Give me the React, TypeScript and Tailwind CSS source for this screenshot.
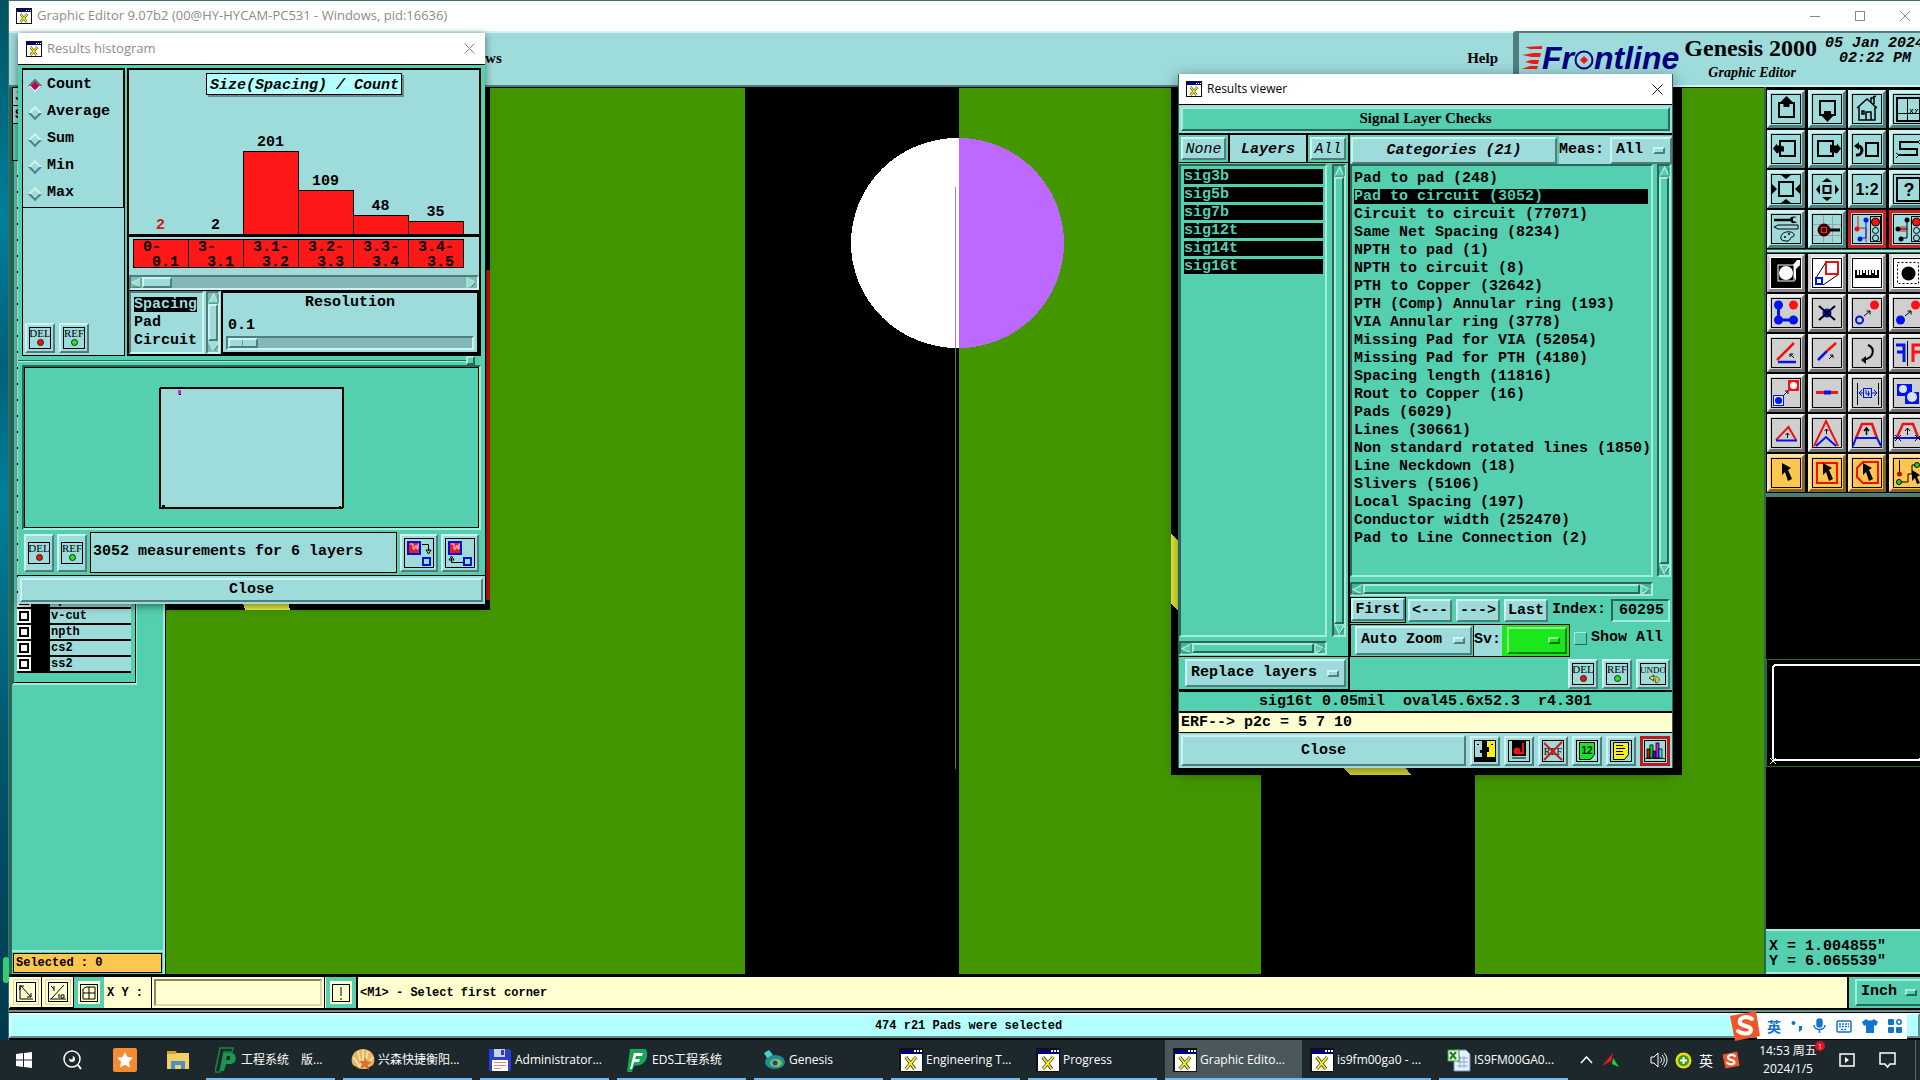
import { useState } from "react";
import type { ReactNode } from "react";

const RAISED = "border-2 border-t-[#cdf3f2] border-l-[#cdf3f2] border-b-[#517d7d] border-r-[#517d7d] bg-[#9edbdb]";
const RAISED_GREEN = "border-2 border-t-[#a6ecdb] border-l-[#a6ecdb] border-b-[#286858] border-r-[#286858] bg-[#54cfb0]";
const SUNKEN_GREEN = "border-2 border-b-[#a6ecdb] border-r-[#a6ecdb] border-t-[#286858] border-l-[#286858] bg-[#54cfb0]";

const BARS = [
  { count: 2, height: 0, from: "0-", to: "0.1", outlier: true },
  { count: 2, height: 0, from: "3-", to: "3.1" },
  { count: 201, height: 83, from: "3.1-", to: "3.2" },
  { count: 109, height: 44, from: "3.2-", to: "3.3" },
  { count: 48, height: 19, from: "3.3-", to: "3.4" },
  { count: 35, height: 13, from: "3.4-", to: "3.5" },
];

const LAYERS = ["sig3b", "sig5b", "sig7b", "sig12t", "sig14t", "sig16t"];

const CATEGORIES = [
  "Pad to pad (248)",
  "Pad to circuit (3052)",
  "Circuit to circuit (77071)",
  "Same Net Spacing (8234)",
  "NPTH to pad (1)",
  "NPTH to circuit (8)",
  "PTH to Copper (32642)",
  "PTH (Comp) Annular ring (193)",
  "VIA Annular ring (3778)",
  "Missing Pad for VIA (52054)",
  "Missing Pad for PTH (4180)",
  "Spacing length (11816)",
  "Rout to Copper (16)",
  "Pads (6029)",
  "Lines (30661)",
  "Non standard rotated lines (1850)",
  "Line Neckdown (18)",
  "Slivers (5106)",
  "Local Spacing (197)",
  "Conductor width (252470)",
  "Pad to Line Connection (2)",
];

/* ---------- icons ---------- */

function XWinIcon({ size = 16 }: { size?: number }) {
  return (
    <svg width={size} height={size} viewBox="0 0 16 16" shapeRendering="crispEdges" className="shrink-0">
      <rect width="16" height="16" fill="#111" />
      <rect x="1" y="1" width="14" height="14" fill="#fff" />
      <rect x="1" y="1" width="14" height="3" fill="#000080" />
      <path d="M10 2h1M12 2h1M14 2h1" stroke="#fff" />
      <path d="M4.500 6l6 8M11.500 6l-7 8" stroke="#222" strokeWidth="2.200" shapeRendering="auto" />
      <path d="M4.500 6l6 8M11.500 6l-7 8" stroke="#f4ee1c" strokeWidth="1.300" shapeRendering="auto" />
    </svg>
  );
}

function CloseX({ color = "#111" }: { color?: string }) {
  return (
    <svg width="11" height="11" viewBox="0 0 11 11" stroke={color} strokeWidth="1">
      <path d="M.5 .5l10 10M10.5 .5l-10 10" />
    </svg>
  );
}

function DelIcon({ word, dot }: { word: string; dot?: string }) {
  const wide = word === "UNDO";
  const w = wide ? 26 : 22;
  return (
    <svg width={w} height="22" viewBox={`0 0 ${w} 22`} className="overflow-visible">
      <rect x=".5" y=".5" width={w - 1} height="21" fill="none" stroke="#000" />
      <text x={w / 2} y="10" fontSize={wide ? 9 : 11} fontWeight="normal" fontFamily="Liberation Serif" textAnchor="middle">
        {word}
      </text>
      {dot ? (
        <circle cx="11.5" cy="15.5" r="3" fill={dot} stroke="#222" />
      ) : (
        <path d="M16 20c5-1 4-8-3-6l1-2-5 3 5 3-1-2c4-1 4 2 2 2z" fill="#f4ee1c" stroke="#222" strokeWidth=".8" />
      )}
    </svg>
  );
}

function SmallButton({ word, dot, tall }: { word: string; dot?: string; tall?: boolean }) {
  return (
    <button
      type="button"
      className={`flex shrink-0 items-center justify-center ${RAISED} ${word === "UNDO" ? "w-[34px]" : "w-[30px]"} ${tall ? "h-[38px]" : "h-[30px]"}`}
    >
      <DelIcon word={word} dot={dot} />
    </button>
  );
}

const CURSOR = "M11 5l9 5-3 2 4 9-4 2-3-9-3 3z";

const toolIcons: ReactNode[] = [
  // view controls
  <>
    <rect x="8" y="9" width="15" height="14" fill="none" stroke="#000" strokeWidth="2" />
    <path d="M15.5 2l-6 6v2h3v3h6v-3h3V8z" />
  </>,
  <>
    <rect x="8" y="7" width="15" height="14" fill="none" stroke="#000" strokeWidth="2" />
    <path d="M12 17h7v4h3l-6.500 7-6.500-7h3z" />
  </>,
  <g fill="none" stroke="#000" strokeWidth="1.5">
    <path d="M5 14l10-9 10 9M7 13v13h16V13M14 26v-8h5v8M10 17h2v3h-2zM19 8V4h3v6M21 3l3-1" />
  </g>,
  <g fill="none" stroke="#000">
    <rect x="4" y="4" width="23" height="23" strokeWidth="2" />
    <path d="M14.500 4v23M4 19.500h23M17 15l3 4M20 15l-3 4M22 15l1.500 2M25 15l-3 4" />
  </g>,
  <>
    <rect x="9" y="7" width="15" height="15" fill="none" stroke="#000" strokeWidth="2" />
    <path d="M2 14.500l4-5v2h3l4 1v5H9l-3 2z" />
  </>,
  <>
    <rect x="6" y="7" width="15" height="15" fill="none" stroke="#000" strokeWidth="2" />
    <path d="M29 14.500l-4-5v2h-3l-4-1v8h4l3 1z" />
  </>,
  <>
    <rect x="14" y="9" width="12" height="13" fill="none" stroke="#000" strokeWidth="2" />
    <path d="M4 21c7 1 8-9 2-9" fill="none" stroke="#000" strokeWidth="3" />
    <path d="M2 12l5-4v8z" />
  </>,
  <>
    <path d="M25 8H7v7h17v6H6" fill="none" stroke="#000" strokeWidth="2" />
    <path d="M25 8l3-3M25 8l3 3M6 21l-3-2M6 21l-3 3" stroke="#000" />
  </>,
  <>
    <rect x="8" y="8" width="14" height="14" fill="none" stroke="#000" strokeWidth="2" />
    <path d="M10 1h10l-5 4zM10 29h10l-5-4zM1 10v10l5-5zM29 10v10l-5-5z" />
  </>,
  <>
    <rect x="11.500" y="12" width="7" height="7" fill="none" stroke="#000" strokeWidth="2" />
    <path d="M15 4l5 4H10zM15 27l5-4H10zM4 15.500l4-5v10zM27 15.500l-4-5v10z" />
  </>,
  <text x="15" y="21" fontSize="16" fontWeight="bold" textAnchor="middle" fontFamily="Liberation Sans">1:2</text>,
  <>
    <rect x="4" y="4" width="23" height="23" fill="none" stroke="#000" strokeWidth="2" />
    <text x="16" y="22" fontSize="18" fontWeight="bold" textAnchor="middle" fontFamily="Liberation Sans">?</text>
  </>,
  <>
    <path d="M3 6h16" stroke="#000" strokeWidth="2.500" />
    <path d="M26 3c-6-2-9 2-6 5 2 2 5 1 6 0l-4-1V4z" />
    <path d="M3 13l4-2h20v4H7z" fill="none" stroke="#000" />
    <path d="M10 25c-1-5 4-8 9-7 5 0 5 5 2 5-2 0-1 3-4 4-3 0-6 0-7-2z" fill="none" stroke="#000" />
    <circle cx="14" cy="23" r="1" /><circle cx="18" cy="20" r="1" />
  </>,
  <>
    <path d="M11.500 1v28M20.500 1v28M1 10.500h28M1 21.500h28" stroke="#b39a9e" />
    <circle cx="12" cy="16" r="6" fill="#400" stroke="#000" />
    <rect x="9.500" y="13.500" width="5" height="5" fill="none" stroke="#f22" />
    <path d="M18 16h10" stroke="#000" strokeWidth="3" />
  </>,
  <>
    <path d="M6 2v12h8v14" fill="none" stroke="#e11" />
    <path d="M14 5v19H8" fill="none" stroke="#0014f0" />
    <circle cx="5" cy="15" r="2.500" fill="#e11" /><circle cx="14" cy="6" r="2.500" fill="#0014f0" /><circle cx="8" cy="25" r="2.500" fill="#0014f0" />
    <rect x="18.500" y="2.500" width="10" height="25" fill="none" stroke="#000" />
    <circle cx="23.500" cy="8" r="4" fill="#f11" stroke="#000" /><circle cx="23.500" cy="16.500" r="3" fill="none" stroke="#000" /><circle cx="23.500" cy="24" r="3" fill="none" stroke="#000" />
  </>,
  <>
    <path d="M14 5v19H8M6 15h8" fill="none" stroke="#000" />
    <path d="M8 12v6M10 12v6M12 12v6" stroke="#e11" />
    <circle cx="5" cy="15" r="2.500" /><circle cx="14" cy="6" r="2.500" /><circle cx="8" cy="25" r="2.500" />
    <rect x="18.500" y="2.500" width="10" height="25" fill="none" stroke="#000" />
    <circle cx="23.500" cy="8" r="4" fill="#f11" stroke="#000" /><circle cx="23.500" cy="16.500" r="3" fill="none" stroke="#000" /><circle cx="23.500" cy="24" r="3" fill="none" stroke="#000" />
  </>,
  // selection filters
  <>
    <rect x="1" y="1" width="28" height="28" />
    <path d="M17 7h5l4-5h3v5l-4 4v12" fill="#fff" />
    <rect x="7" y="7" width="16" height="16" fill="#000" stroke="#fff" />
    <circle cx="15" cy="15" r="7" fill="#fff" />
  </>,
  <>
    <path d="M4 20L14 4M11 27l16-11" stroke="#000" />
    <rect x="14" y="4" width="12" height="12" fill="#fff" stroke="#e11" strokeWidth="2" />
    <rect x="4" y="20" width="6" height="6" fill="#fff" stroke="#0014f0" strokeWidth="2" />
  </>,
  <path d="M3 12h2v5h2v-5h1v5h2v-5h1v3h2v-3h1v5h2v-5h1v5h2v-5h1v3h2v-3h1v5h2v-5h2v8H3z" />,
  <>
    <rect x="4.500" y="4.500" width="21" height="21" fill="none" stroke="#000" strokeDasharray="2 2" />
    <circle cx="15.500" cy="15.500" r="7" />
  </>,
  // edit operations
  <>
    <path d="M7.500 7v15H22" fill="none" stroke="#0014f0" strokeWidth="3" />
    <circle cx="7.500" cy="7" r="4.500" fill="#0014f0" /><circle cx="22.500" cy="7" r="4.500" fill="#f11" />
    <circle cx="7.500" cy="22" r="4.500" fill="#0014f0" /><circle cx="22.500" cy="22" r="4.500" fill="#0014f0" />
  </>,
  <>
    <circle cx="15" cy="15" r="4.500" fill="#0014c0" />
    <path d="M7 8l16 14M23 8L7 22" stroke="#000" strokeWidth="2" />
  </>,
  <>
    <circle cx="22.500" cy="7" r="4.500" fill="#f11" />
    <circle cx="7.500" cy="22" r="3.500" fill="none" stroke="#0014f0" strokeWidth="2" />
    <path d="M12 18l6-5M14.500 13H18v3.500" fill="none" stroke="#000" />
  </>,
  <>
    <circle cx="22.500" cy="7" r="4.500" fill="#f11" />
    <circle cx="7.500" cy="22" r="4.500" fill="#0014f0" />
    <path d="M12 18l6-5M14.500 13H18v3.500" fill="none" stroke="#000" />
  </>,
  <>
    <path d="M6 22L23 5" stroke="#e11" strokeWidth="2.500" />
    <path d="M7 24h18" stroke="#0014f0" strokeWidth="2.500" />
    <path d="M23 20l-4-4M19 19v-3h3" fill="none" stroke="#000" />
  </>,
  <>
    <path d="M6 22l9-9" stroke="#0014f0" strokeWidth="2.500" />
    <path d="M15 13l9-8" stroke="#e11" strokeWidth="2.500" />
    <path d="M17 21l4-4M18 17h3v3" fill="none" stroke="#000" />
  </>,
  <>
    <path d="M16 7c7 3 7 13-5 15" fill="none" stroke="#000" strokeWidth="2" />
    <path d="M9 22l5-4v8z" />
  </>,
  <>
    <path d="M3 7h8v17M4 14h7" fill="none" stroke="#0014f0" strokeWidth="3" />
    <path d="M14.500 3v25" stroke="#000" />
    <path d="M28 7h-8v17M27 14h-7" fill="none" stroke="#f11" strokeWidth="3" />
  </>,
  <>
    <rect x="17" y="2" width="11" height="11" fill="#f11" /><circle cx="22.500" cy="7.500" r="3.500" fill="#fff" />
    <rect x="2.500" y="17.500" width="10" height="10" fill="#d8e0ff" stroke="#0014f0" /><circle cx="7.500" cy="22.500" r="3.500" fill="#0014f0" />
    <path d="M13 17l4-4M14 13h3v3" fill="none" stroke="#000" />
  </>,
  <>
    <path d="M4 14.500h22" stroke="#f11" strokeWidth="3" />
    <path d="M12 14.500h7" stroke="#0014f0" strokeWidth="4" />
  </>,
  <>
    <path d="M5.500 5v22M26.500 5v22" stroke="#000" />
    <path d="M7 15h5M20 15h5M10 12l-3 3 3 3M22 12l3 3-3 3" fill="none" stroke="#0014f0" />
    <rect x="11.500" y="10.500" width="8" height="9" fill="none" stroke="#0014f0" />
    <path d="M14 12v4h4M16.500 13v5" fill="none" stroke="#0014f0" />
  </>,
  <>
    <path d="M4 6h15v8h7v12H12v-8H4z" fill="#0014f0" />
    <circle cx="10" cy="11" r="4" fill="#d8e0ff" /><circle cx="19" cy="19" r="5" fill="#d8e0ff" />
  </>,
  <>
    <path d="M5 22L17.500 9 25 22" fill="none" stroke="#e11" strokeWidth="2" />
    <path d="M5 22.500h21" stroke="#0014f0" strokeWidth="2" />
    <path d="M16.500 20v-5M14.500 17l2-2 2 2" fill="none" stroke="#000" />
  </>,
  <>
    <path d="M2 28L14 3l12 25" fill="none" stroke="#e11" strokeWidth="2" />
    <path d="M4 28l10-9 10 9" fill="none" stroke="#0014f0" strokeWidth="2" />
    <path d="M14.500 16v-5M12.500 13l2-2 2 2" fill="none" stroke="#000" />
  </>,
  <>
    <path d="M4 20l6-14h10l5 14" fill="none" stroke="#e11" strokeWidth="2.500" />
    <path d="M1 28l3-8h21l4 8" fill="none" stroke="#0014f0" strokeWidth="2" />
    <path d="M14.500 17v-7M12 13l2.500-3 2.500 3" fill="none" stroke="#000" strokeWidth="1.500" />
  </>,
  <>
    <path d="M4 19l6-13h10l5 13" fill="none" stroke="#e11" strokeWidth="2.500" />
    <path d="M1 20h28" stroke="#0014f0" strokeWidth="2" />
    <path d="M14.500 17v-7M12 13l2.500-3 2.500 3M2 17l6 6M8 17l-6 6M22 17l6 6M28 17l-6 6" fill="none" stroke="#000" />
  </>,
  // pick modes
  <path d={CURSOR} />,
  <>
    <rect x="5" y="5" width="20" height="20" fill="none" stroke="#e11" strokeWidth="2" />
    <path d={CURSOR} />
  </>,
  <>
    <path d="M11 4h15v21H11l-6-6v-9z" fill="none" stroke="#e11" strokeWidth="2" />
    <path d={CURSOR} />
  </>,
  <>
    <path d="M6.500 2v14M8 24h7v-8h4V7h4" fill="none" stroke="#000" />
    <circle cx="6.500" cy="16" r="2.500" fill="#b11" /><circle cx="6" cy="24" r="2.500" fill="#2d2" stroke="#000" /><circle cx="24" cy="7" r="2.500" fill="#2d2" stroke="#000" />
    <path d="M19 12l8 5-3 2 3 6-3 1-2-6-3 3z" />
  </>,
];

function ToolButton({ index }: { index: number }) {
  const red = index === 14 || index === 15;
  let look = "bg-[#9edbdb] border-t-[#cdf3f2] border-l-[#cdf3f2] border-b-[#517d7d] border-r-[#517d7d]";
  if (red) look = "bg-[#9edbdb] border-[#d21f1f]";
  else if (index >= 36) look = "bg-[#fcc64f] border-t-[#ffe3a8] border-l-[#ffe3a8] border-b-[#836527] border-r-[#836527]";
  else if (index >= 20) look = "bg-[#cfcfcf] border-t-[#efefef] border-l-[#efefef] border-b-[#6f6f6f] border-r-[#6f6f6f]";
  else if (index >= 16) look = "bg-white border-t-[#e4e0e4] border-l-[#cfcbcf] border-b-[#8a868a] border-r-[#8a868a]";
  return (
    <button type="button" className={`flex size-[38px] items-center justify-center border-[3px] ${look}`}>
      <svg width="30" height="30" viewBox="0 0 30 30" className="shrink-0">
        <rect x=".5" y=".5" width="29" height="29" fill="none" stroke="#000" />
        {toolIcons[index]}
      </svg>
    </button>
  );
}

/* ---------- shared controls ---------- */

function Arrow({ dir, tone }: { dir: "up" | "down" | "left" | "right"; tone: string }) {
  const shapes = {
    up: "M6 1l5 10H1z",
    down: "M6 11L1 1h10z",
    left: "M1 6l10-5v10z",
    right: "M11 6L1 1v10z",
  };
  return (
    <svg width="11" height="11" viewBox="0 0 12 12" className="shrink-0">
      <path d={shapes[dir]} fill={tone} stroke="#a6ecdb" strokeWidth="1.500" />
      <path d={dir === "left" || dir === "up" ? "M1 11h10V1" : "M6 11l5-6"} fill="none" stroke="#286858" strokeWidth="1" />
    </svg>
  );
}

function VScroll({ blue }: { blue?: boolean }) {
  return (
    <div
      className={`flex w-[14px] shrink-0 flex-col items-center border-2 ${
        blue ? "border-t-[#517d7d] border-l-[#517d7d] border-b-[#cdf3f2] border-r-[#cdf3f2] bg-[#84b8b8]" : "border-t-[#286858] border-l-[#286858] border-b-[#a6ecdb] border-r-[#a6ecdb] bg-[#48b096]"
      }`}
    >
      <Arrow dir="up" tone={blue ? "#9edbdb" : "#54cfb0"} />
      <div className={`w-full flex-1 ${blue ? RAISED : RAISED_GREEN}`} />
      <Arrow dir="down" tone={blue ? "#9edbdb" : "#54cfb0"} />
    </div>
  );
}

function HScroll() {
  return (
    <div className="flex h-[14px] shrink-0 items-center border-2 border-t-[#286858] border-l-[#286858] border-b-[#a6ecdb] border-r-[#a6ecdb] bg-[#48b096]">
      <Arrow dir="left" tone="#54cfb0" />
      <div className={`h-full flex-1 ${RAISED_GREEN}`} />
      <Arrow dir="right" tone="#54cfb0" />
    </div>
  );
}

function OptionMenu({ label, value, className }: { label: string; value: string; className: string }) {
  return (
    <div className={`relative flex items-center ${className}`}>
      <select aria-label={label} className="w-full appearance-none bg-transparent pl-1 outline-none">
        <option>{value}</option>
      </select>
      <span className="pointer-events-none absolute right-[5px] h-[7px] w-3 border-2 border-t-[#cdf3f2] border-l-[#cdf3f2] border-b-[#517d7d] border-r-[#517d7d]" />
    </div>
  );
}

/* ---------- main window ---------- */

function BrandBar() {
  return (
    <div className="flex h-[56px] shrink-0 bg-[#9edbdb]">
      <div className="flex flex-1 items-center justify-end border-t-2 border-r-2 border-b-2 border-t-[#cdf3f2] border-r-[#517d7d] border-b-[#517d7d] pr-[15px] pb-[2px]">
        <div className="flex flex-1 justify-start pl-[433px]">
          <a href="#windows" className="font-['Liberation_Serif',serif] text-[15px] font-bold">Windows</a>
        </div>
        <a href="#help" className="font-['Liberation_Serif',serif] text-[15px] font-bold">Help</a>
      </div>
      <div className="flex w-[405px] shrink-0 overflow-hidden border-t-2 border-l-4 border-b-2 border-t-[#517d7d] border-l-[#517d7d] border-b-[#cdf3f2] pl-[3px]">
        <div className="flex h-[50px] shrink-0 items-center">
          <svg width="20" height="24" viewBox="0 0 20 24" fill="#f01818">
            <path d="M3 1l17-1v3H8zM0 9l11-2h8l-1 4h-8zM3 16l6-2h8l-1 4h-5zM0 23l8-3h8l-1 3z" />
          </svg>
          <span className="flex items-center font-['Liberation_Sans',sans-serif] text-[32px] leading-[36px] font-bold text-[#000080] italic">
            Fr
            <svg width="20" height="20" viewBox="0 0 20 20" className="mt-1">
              <circle cx="10" cy="10" r="8.500" fill="none" stroke="#000080" strokeWidth="2" />
              <path d="M10 6l4 4-4 4-4-4z" fill="#f01818" />
            </svg>
            ntline
          </span>
        </div>
        <div className="shrink-0 pl-[5px] font-['Liberation_Serif',serif] font-bold">
          <p className="text-[24px] leading-[30px]">Genesis 2000</p>
          <p className="pl-6 text-[14px] leading-[20px] italic">Graphic Editor</p>
        </div>
        <div className="shrink-0 pt-[3px] pl-[8px] text-[15px] leading-[15px] font-bold italic">
          <p>05 Jan 2024</p>
          <p className="pl-[14px]">02:22 PM</p>
        </div>
      </div>
    </div>
  );
}

function LayerPanel() {
  const names = [...Array(27).fill(""), "sp", "v-cut", "npth", "cs2", "ss2"];
  return (
    <div className="flex w-[156px] shrink-0 flex-col border-r-2 border-l-[3px] border-r-[#a6ecdb] border-l-[#286858] bg-[#54cfb0]">
      <div className="flex-1">
        <div className="h-[74px] w-[125px] border border-black">
          <p className="h-[18px] border-b border-black bg-[#9edbdb] pl-[2px] text-[12px] leading-[18px] font-bold">Job</p>
          <p className="h-[18px] border-b border-black bg-[#9edbdb] pl-[2px] text-[12px] leading-[18px] font-bold">Step</p>
        </div>
        <div className="w-[125px] border-r border-b-2 border-l-2 border-r-[#a6ecdb] border-b-[#a6ecdb] border-l-[#286858]">
          <ul className="border-r border-b border-black pr-1 pb-[9px] pl-[3px]">
            {names.map((name, i) => (
              <li key={i} className="flex h-4 border-b-2 border-black bg-black text-[12px] font-bold">
                <label className="flex flex-1">
                  <input
                    type="checkbox"
                    className="m-0 h-[14px] w-[14px] appearance-none border-2 border-white bg-white shadow-[inset_0_0_0_2px_#000]"
                  />
                  <span className="ml-[19px] flex-1 bg-[#9edbdb] pl-px leading-[14px]">{name}</span>
                </label>
              </li>
            ))}
          </ul>
        </div>
      </div>
      <div className="border-t-2 border-[#a6ecdb] p-[1px]">
        <p className="h-[20px] border border-black bg-[#fcc64f] pl-[2px] text-[12px] leading-[18px] font-bold">Selected : 0</p>
      </div>
    </div>
  );
}

function BoardView() {
  return (
    <div className="min-w-0 flex-1 overflow-hidden border-t border-l border-black bg-[#439600]">
      <svg viewBox="0 0 1598 886" preserveAspectRatio="xMinYMin slice" className="block h-full w-full" shapeRendering="crispEdges">
        <rect width="1598" height="886" fill="#439600" />
        <rect x="579" width="214" height="886" />
        <rect x="1095" width="214" height="886" />
        <ellipse cx="791.500" cy="155" rx="106.500" ry="105" fill="#fff" />
        <path d="M793 50a105 105 0 0 1 0 210z" fill="#bd69ff" />
        <path d="M789.500 99v161" stroke="#9c7fc4" />
        <path d="M789.500 260v421" stroke="#6a7a50" />
        {/* areas not yet redrawn behind the floating windows */}
        <rect width="324" height="522" />
        <rect x="320" y="182" width="4" height="330" fill="#b81408" />
        <path d="M76 512h46l2 10H79z" fill="#f0f03c" />
        <rect x="1005" width="511" height="687" />
        <path d="M1005 446l8 7v70l-8-7z" fill="#f0f03c" />
        <path d="M1176 679h63l6 8h-61z" fill="#f0f03c" />
      </svg>
    </div>
  );
}

function ToolPanel() {
  return (
    <div className="flex w-[156px] shrink-0 flex-col overflow-hidden border-l-2 border-[#286858] bg-[#54cfb0]">
      <div className="w-[162px] border-t border-l border-black bg-black">
        <div className="grid w-[160px] grid-cols-4 gap-[2px] pt-[2px]">
          {toolIcons.slice(0, 16).map((_, i) => (
            <ToolButton key={i} index={i} />
          ))}
        </div>
        <div className="mt-px h-[4px] border-y border-[#286858] bg-[#a6ecdb]" />
        <div className="grid w-[160px] grid-cols-4 gap-[2px] pt-px pb-px">
          {toolIcons.slice(16).map((_, i) => (
            <ToolButton key={i} index={i + 16} />
          ))}
        </div>
      </div>
      <div className="flex flex-1 flex-col justify-center border-t-4 border-[#4d7d76] bg-black">
        <svg width="156" height="108" viewBox="0 0 156 108" className="shrink-0" shapeRendering="crispEdges">
          <path d="M0 .5h156M0 107.500h156M.5 0v108" stroke="#2f6a10" />
          <rect x="7" y="6" width="148" height="95" rx="3" fill="none" stroke="#fff" strokeWidth="2" />
          <path d="M4 99l6 6M10 99l-6 6" stroke="#fff" />
        </svg>
      </div>
      <div className="h-[45px] border-y-2 border-t-[#a6ecdb] border-b-[#a6ecdb] pt-[8px] pl-[3px] text-[15px] leading-[15px] font-bold">
        <p>X = 1.004855"</p>
        <p>Y = 6.065539"</p>
      </div>
    </div>
  );
}

function CommandRow() {
  return (
    <div className="flex h-[36px] shrink-0 items-stretch border-t-[3px] border-b-2 border-black bg-[#ffffcf] pl-px text-[12px] font-bold">
      <button type="button" className="flex w-[32px] items-center justify-center border-r border-b border-black">
        <svg width="26" height="26" viewBox="0 0 26 26" fill="none" stroke="#000">
          <rect x=".5" y=".5" width="25" height="25" stroke="#d8d8a8" />
          <rect x="3.500" y="3.500" width="19" height="19" />
          <path d="M7 6v14h13M8 7l10 11M7 11V7h4M14 18h4v-4" />
        </svg>
      </button>
      <button type="button" className="flex w-[32px] items-center justify-center border-r border-b border-black">
        <svg width="26" height="26" viewBox="0 0 26 26" fill="none" stroke="#000">
          <rect x=".5" y=".5" width="25" height="25" stroke="#d8d8a8" />
          <rect x="3.500" y="3.500" width="19" height="19" />
          <path d="M5 20h16M6 20L19 6M9 7v5M6 7l3 3M14 15v4M16 16h3v3h-3z" />
        </svg>
      </button>
      <button type="button" className="flex w-[30px] items-center justify-center border-4 border-[#54cfb0]">
        <svg width="20" height="20" viewBox="0 0 20 20" fill="none" stroke="#000">
          <rect x="1.500" y="1.500" width="17" height="17" />
          <path d="M4 10V6l3-2h9v12H4zM10 4v12M4 10h12" />
        </svg>
      </button>
      <label htmlFor="xy" className="flex w-[48px] items-center border-r border-black pl-[3px]">
        X Y :
      </label>
      <div className="flex border-r border-black p-[2px]">
        <input id="xy" className="w-[168px] border-2 border-t-[#85856a] border-l-[#85856a] border-b-[#d8d8a8] border-r-[#d8d8a8] bg-[#ffffcf] px-1 outline-none" />
      </div>
      <button type="button" className="ml-px flex w-[30px] items-center justify-center border-4 border-[#54cfb0]">
        <svg width="18" height="18" viewBox="0 0 18 18" fill="none" stroke="#000">
          <rect x=".5" y=".5" width="17" height="17" />
          <path d="M9 3v9M9 14v2" />
        </svg>
      </button>
      <p className="flex flex-1 items-center border-r-2 border-l-2 border-black pl-[2px]">&lt;M1&gt; - Select first corner</p>
      <div className="w-[71px] overflow-hidden bg-[#54cfb0] py-[2px] pl-[6px]">
        <div className={`relative flex h-[27px] w-[84px] items-center text-[15px] font-bold ${RAISED_GREEN}`}>
          <select aria-label="Units" className="w-full appearance-none bg-transparent pl-1 outline-none">
            <option>Inch</option>
          </select>
          <span className={`pointer-events-none absolute left-[48px] h-[7px] w-3 ${RAISED_GREEN}`} />
        </div>
      </div>
    </div>
  );
}

/* ---------- results histogram ---------- */

function Histogram() {
  const [stat, setStat] = useState("Count");
  const [kind, setKind] = useState("Spacing");
  return (
    <section className="absolute top-[33px] left-[18px] w-[467px] bg-[#54cfb0] text-[15px] font-bold shadow-[0_2px_8px_rgba(0,0,0,0.5)]">
      <header className="flex h-[31px] items-center bg-white px-2 font-['Open_Sans',sans-serif] text-[13px] font-normal text-[#8c8c8c]">
        <XWinIcon />
        <h2 className="flex-1 pl-[5px]">Results histogram</h2>
        <button type="button" aria-label="Close window" className="pr-[2px]">
          <CloseX color="#888" />
        </button>
      </header>

      <div className="flex gap-[2px] border-t border-black px-1 pt-[3px]">
        <div className="flex w-[103px] flex-col justify-between border border-black bg-[#9edbdb]">
          <fieldset className="flex flex-col border-t border-r border-b border-black pt-[2px]">
            {["Count", "Average", "Sum", "Min", "Max"].map((s) => (
              <label key={s} className="flex h-[27px] items-center pl-[7px]">
                <input
                  type="radio"
                  name="stat"
                  checked={stat === s}
                  onChange={() => setStat(s)}
                  className="size-[10px] rotate-45 appearance-none border-2 border-t-[#cdf3f2] border-r-[#517d7d] border-b-[#517d7d] border-l-[#cdf3f2] bg-[#9edbdb] checked:border-t-[#517d7d] checked:border-r-[#cdf3f2] checked:border-b-[#cdf3f2] checked:border-l-[#517d7d] checked:bg-[#c8004c]"
                />
                <span className="pl-[7px]">{s}</span>
              </label>
            ))}
          </fieldset>
          <div className="flex gap-1 p-[2px]">
            <SmallButton word="DEL" dot="#f01010" />
            <SmallButton word="REF" dot="#20e820" />
          </div>
        </div>

        <div className="flex-1 border-2 border-black bg-[#9edbdb]">
          <div className="flex h-[27px] justify-center pt-[3px]">
            <p className="h-[22px] w-[196px] border border-black bg-[#b4ffff] px-[3px] leading-[24px] whitespace-nowrap italic shadow-[2px_2px_0_#6c8c8c]">
              Size(Spacing) / Count
            </p>
          </div>
          <div className="flex h-[140px] items-end border-b-[3px] border-black pl-[4px]">
            {BARS.map((b) => (
              <div key={b.from} className="flex w-[55px] flex-col items-center">
                <span className={b.outlier ? "leading-[17px] text-[#d01818]" : "leading-[17px]"}>{b.count}</span>
                {b.height > 0 && (
                  <div className="w-[56px] self-start border border-b-0 border-black bg-[#ff1818]" style={{ height: b.height }} />
                )}
              </div>
            ))}
          </div>
          <div className="mt-[2px] flex h-[29px] pl-[4px]">
            {BARS.map((b) => (
              <div key={b.from} className="w-[55px] border border-r-0 border-black bg-[#ff1818] pl-[9px] leading-[15px] last:w-[56px] last:border-r">
                <p>{b.from}</p>
                <p className="pl-[9px]">{b.to}</p>
              </div>
            ))}
          </div>
          <div className="mt-[7px] flex h-[15px] items-center border-2 border-t-[#517d7d] border-l-[#517d7d] border-b-[#cdf3f2] border-r-[#cdf3f2] bg-[#84b8b8]">
            <Arrow dir="left" tone="#9edbdb" />
            <div className={`h-full w-[30px] ${RAISED}`} />
            <span className="flex-1" />
            <Arrow dir="right" tone="#9edbdb" />
          </div>
          <div className="flex h-[64px] border-t border-black">
            <ul className="w-[75px] overflow-hidden border-2 border-t-[#517d7d] border-l-[#517d7d] border-b-[#cdf3f2] border-r-[#cdf3f2] pt-[2px] pl-[3px]">
              {["Spacing", "Pad", "Circuit"].map((k) => (
                <li key={k} className="flex h-[18px] items-center">
                  <button
                    type="button"
                    onClick={() => setKind(k)}
                    className={`h-[15px] text-left leading-[15px] ${kind === k ? "bg-black text-[#9edbdb]" : ""}`}
                  >
                    {k}
                  </button>
                </li>
              ))}
            </ul>
            <div className="ml-[2px] flex">
              <VScroll blue />
            </div>
            <div className="ml-px flex flex-1 flex-col border-2 border-black">
              <label htmlFor="resolution" className="text-center leading-[20px]">Resolution</label>
              <output className="pt-[5px] pl-[5px] leading-[16px]">0.1</output>
              <input
                id="resolution"
                type="range"
                min="0"
                max="10"
                defaultValue="0"
                className="mx-[3px] mt-[2px] h-[14px] appearance-none border-2 border-t-[#517d7d] border-l-[#517d7d] border-b-[#cdf3f2] border-r-[#cdf3f2] bg-[#84b8b8] [&::-webkit-slider-thumb]:h-[10px] [&::-webkit-slider-thumb]:w-[30px] [&::-webkit-slider-thumb]:appearance-none [&::-webkit-slider-thumb]:border-2 [&::-webkit-slider-thumb]:border-t-[#cdf3f2] [&::-webkit-slider-thumb]:border-l-[#cdf3f2] [&::-webkit-slider-thumb]:border-b-[#517d7d] [&::-webkit-slider-thumb]:border-r-[#517d7d] [&::-webkit-slider-thumb]:bg-[linear-gradient(90deg,#9edbdb_12px,#517d7d_12px,#cdf3f2_14px,#9edbdb_14px)]"
              />
            </div>
          </div>
        </div>
      </div>

      <div className="flex h-[9px] items-center justify-end border-black pr-[10px]">
        <span className="h-[2px] flex-1 border-b border-b-[#a6ecdb] bg-[#286858]" />
        <span className={`size-[9px] ${RAISED_GREEN}`} />
      </div>

      <div className="mx-1 border-2 border-t-[#286858] border-l-[#286858] border-b-[#a6ecdb] border-r-[#a6ecdb]">
        <div className="flex h-[161px] items-center justify-center border border-black">
          <svg width="185" height="122" viewBox="0 0 185 122" shapeRendering="crispEdges">
            <rect x="1" y="1" width="183" height="120" rx="1" fill="#9edbdb" stroke="#000" strokeWidth="2" />
            <rect x="19" y="3" width="3" height="4" fill="#d020e0" />
            <path d="M20 7h2v1h-2zM3 118h3v2H3zM180 119h2v1h-2z" />
          </svg>
        </div>
      </div>

      <div className="flex h-[45px] items-center gap-[3px] px-[6px]">
        <SmallButton word="DEL" dot="#f01010" tall />
        <SmallButton word="REF" dot="#20e820" tall />
        <p className="h-[41px] flex-1 border border-black bg-[#9edbdb] pl-[2px] leading-[38px]">3052 measurements for 6 layers</p>
        {[0, 1].map((i) => (
          <button key={i} type="button" className={`flex size-[38px] items-center justify-center ${RAISED}`}>
            <svg width="30" height="30" viewBox="0 0 30 30" className="shrink-0">
              <rect x=".5" y=".5" width="29" height="29" fill="none" stroke="#000" />
              <rect x="4" y="4" width="12" height="12" fill="#f01828" stroke="#0014d8" strokeWidth="2" />
              <path d="M6 6h3v5h2V8h2v3h1V6h1" fill="none" stroke="#e8d8f0" />
              <rect x="19" y="20" width="7" height="7" fill="none" stroke="#0014d8" strokeWidth="2" />
              {i === 0 ? <path d="M18 6.500h6.500V13M22 12l2.500 4 2.500-4z" stroke="#000" fill="none" /> : <path d="M18 24.500H6.500V20M4 22l2.500-4L9 22z" stroke="#000" fill="none" />}
            </svg>
          </button>
        ))}
      </div>
      <div className="border-t border-black bg-[#9edbdb] p-[2px]">
        <button type="button" className={`h-[24px] w-full leading-[20px] ${RAISED}`}>Close</button>
      </div>
    </section>
  );
}

/* ---------- results viewer ---------- */

const viewerIcons: ReactNode[] = [
  <>
    <rect x="1" y="1" width="11" height="20" fill="#9edbdb" />
    <rect x="12" y="1" width="9" height="20" fill="#f8f010" />
    <path d="M8 1h5v6h2v5h-2v5h8v4H1v-4h7v-4H6v-3h2zM3 4h2v1H3zM17 4h2v1h-2z" />
  </>,
  <>
    <rect x="4" y="1" width="14" height="15" />
    <path d="M15 3v10H7" fill="none" stroke="#f01010" strokeWidth="2" />
    <circle cx="9" cy="11" r="3.500" fill="#f01010" />
    <path d="M4 18h14" stroke="#000" />
  </>,
  <>
    <text x="11" y="15" fontSize="10" fontWeight="normal" fontFamily="Liberation Serif" textAnchor="middle">REF</text>
    <path d="M2 3l18 17M20 2L2 20" stroke="#e01010" strokeWidth="2" />
  </>,
  <>
    <path d="M3.500 2.500h15v12l-4 5h-11z" fill="#10e820" stroke="#000" />
    <text x="11" y="14" fontSize="10" fontWeight="bold" fontFamily="Liberation Sans" textAnchor="middle">12</text>
  </>,
  <>
    <path d="M3.500 2.500h15v12l-4 5h-11z" fill="#f8f010" stroke="#000" />
    <path d="M6 5.500h7M6 8.500h9M6 11.500h7M6 14.500h8" stroke="#000" />
  </>,
  <g stroke="#000" strokeWidth=".8">
    <rect x="3" y="9" width="3" height="9" fill="#d01010" />
    <rect x="6" y="5" width="3" height="13" fill="#10d020" />
    <rect x="9" y="11" width="3" height="7" fill="#1020c0" />
    <rect x="12" y="3" width="3" height="15" fill="#e010f0" />
    <rect x="15" y="9" width="3" height="9" fill="#40e0f0" />
    <path d="M1 18.500h20" />
  </g>,
];

function ResultsViewer() {
  const [picked, setPicked] = useState(1);
  const [showAll, setShowAll] = useState(false);
  return (
    <section className="absolute top-[74px] left-[1178px] w-[495px] border-x border-[#286858] bg-[#54cfb0] text-[15px] font-bold shadow-[0_4px_14px_rgba(0,0,0,0.5)]">
      <header className="flex h-[30px] items-center bg-white px-[7px] font-['Open_Sans',sans-serif] text-[12px] font-normal text-black">
        <XWinIcon />
        <h2 className="flex-1 pl-[5px]">Results viewer</h2>
        <button type="button" aria-label="Close window" className="pr-[2px]">
          <CloseX />
        </button>
      </header>

      <div className="border-t border-b-2 border-black bg-[#9edbdb] p-[2px]">
        <h3 className={`h-[24px] text-center font-['Liberation_Serif',serif] leading-[18px] ${RAISED_GREEN}`}>Signal Layer Checks</h3>
      </div>

      <div className="flex">
        <div className="flex w-[171px] shrink-0 flex-col border-r-2 border-black">
          <div className="flex h-[28px] gap-[2px] border-b border-black bg-black">
            <div className="bg-[#54cfb0] p-[2px]">
              <button type="button" className={`h-[23px] w-[45px] leading-[21px] font-normal italic ${RAISED}`}>None</button>
            </div>
            <p className="flex-1 bg-[#9edbdb] text-center leading-[29px] italic">Layers</p>
            <div className="bg-[#54cfb0] p-[2px]">
              <button type="button" className={`h-[23px] w-[36px] leading-[21px] font-normal italic ${RAISED}`}>All</button>
            </div>
          </div>
          <div className="flex flex-1 gap-[5px] pr-[2px] pt-px">
            <ul className={`flex-1 pt-[3px] pr-[2px] pl-[3px] ${SUNKEN_GREEN}`}>
              {LAYERS.map((l) => (
                <li key={l} className="mb-[3px] flex">
                  <button type="button" className="h-[15px] w-full bg-black text-left leading-[15px] text-[#54cfb0]">
                    {l}
                  </button>
                </li>
              ))}
            </ul>
            <VScroll />
          </div>
          <div className="pt-1 pr-[21px]">
            <HScroll />
          </div>
          <div className="mt-px border-y border-black py-[2px] pr-[2px] pl-[6px]">
            <OptionMenu label="Layer mode" value="Replace layers" className={`h-[28px] ${RAISED}`} />
          </div>
        </div>

        <div className="flex min-w-0 flex-1 flex-col">
          <div className="flex h-[29px] items-center pt-px pl-px">
            <button type="button" className={`h-[27px] w-[206px] leading-[23px] italic ${RAISED}`}>Categories (21)</button>
            <div className="ml-[2px] flex h-full flex-1 items-center bg-[#9edbdb]">
              <span className="flex-1">Meas:</span>
              <OptionMenu label="Meas" value="All" className={`h-[27px] w-[62px] ${RAISED}`} />
            </div>
          </div>
          <div className="flex h-[413px] gap-[4px] pr-px">
            <ul className={`flex-1 overflow-hidden pt-[3px] pr-[3px] pl-[2px] ${SUNKEN_GREEN}`}>
              {CATEGORIES.map((c, i) => (
                <li key={c} className="flex h-[18px] items-center">
                  <button
                    type="button"
                    onClick={() => setPicked(i)}
                    className={`h-[15px] w-full text-left leading-[15px] whitespace-nowrap ${i === picked ? "bg-black text-[#54cfb0]" : ""}`}
                  >
                    {c}
                  </button>
                </li>
              ))}
            </ul>
            <VScroll />
          </div>
          <div className="pt-[5px] pr-[19px]">
            <HScroll />
          </div>
          <div className="flex h-[28px] items-center gap-1 pr-[2px]">
            <div className="-mr-[2px] border border-black">
              <button type="button" className={`h-[23px] w-[54px] leading-[19px] ${RAISED}`}>First</button>
            </div>
            <button type="button" className={`h-[23px] w-[44px] leading-[19px] ${RAISED}`}>&lt;---</button>
            <button type="button" className={`h-[23px] w-[44px] leading-[19px] ${RAISED}`}>---&gt;</button>
            <button type="button" className={`h-[23px] w-[44px] leading-[19px] ${RAISED}`}>Last</button>
            <label htmlFor="index" className="flex-1">Index:</label>
            <input id="index" defaultValue="60295" className={`h-[23px] w-[59px] pl-[6px] outline-none ${SUNKEN_GREEN}`} />
          </div>
          <div className="flex h-[33px]">
            <div className="border border-black py-px pr-[1px] pl-1">
              <OptionMenu label="Zoom mode" value="Auto Zoom" className={`h-[29px] w-[117px] ${RAISED}`} />
            </div>
            <span className="flex w-[28px] items-center border-t border-b border-black bg-[#9edbdb]">Sv:</span>
            <div className="border border-l-0 border-black bg-[#1ae81a] p-[2px] pl-[5px]">
              <div className="relative flex h-[27px] w-[60px] items-center border-2 border-t-[#8cf48c] border-l-[#8cf48c] border-b-[#0d7a0d] border-r-[#0d7a0d]">
                <select aria-label="Sv" className="w-full appearance-none bg-transparent outline-none">
                  <option></option>
                </select>
                <span className="pointer-events-none absolute right-[5px] h-[7px] w-3 border-2 border-t-[#8cf48c] border-l-[#8cf48c] border-b-[#0d7a0d] border-r-[#0d7a0d]" />
              </div>
            </div>
            <label className="flex h-[28px] items-center gap-1 pl-[4px] whitespace-nowrap">
              <input
                type="checkbox"
                checked={showAll}
                onChange={(e) => setShowAll(e.target.checked)}
                className="size-[13px] appearance-none border border-t-[#a6ecdb] border-l-[#a6ecdb] border-b-[#286858] border-r-[#286858] checked:bg-[#286858]"
              />
              Show All
            </label>
          </div>
          <div className="flex h-[33px] items-center justify-end gap-1 pr-[2px]">
            <SmallButton word="DEL" dot="#f01010" />
            <SmallButton word="REF" dot="#20e820" />
            <SmallButton word="UNDO" />
          </div>
        </div>
      </div>

      <p className="h-[21px] border-t-2 border-black text-center leading-[20px] whitespace-pre">{"sig16t 0.05mil  oval45.6x52.3  r4.301"}</p>
      <p className="h-[22px] border-t-2 border-b border-black bg-[#ffffcf] pl-[2px] leading-[20px] text-black">ERF--&gt; p2c = 5 7 10</p>
      <div className="flex items-center gap-1 bg-[#9edbdb] p-[2px]">
        <button type="button" className={`h-[31px] flex-1 leading-[27px] ${RAISED}`}>Close</button>
        {viewerIcons.map((icon, i) => (
          <button
            key={i}
            type="button"
            className={`flex size-[30px] items-center justify-center ${i === 5 ? "border-[3px] border-[#c01818] bg-[#9edbdb]" : RAISED}`}
          >
            <svg width="22" height="22" viewBox="0 0 22 22" className="shrink-0">
              <rect x=".5" y=".5" width="21" height="21" fill="none" stroke="#000" />
              {icon}
            </svg>
          </button>
        ))}
      </div>
    </section>
  );
}

/* ---------- taskbar ---------- */

function GreenP() {
  return (
    <svg width="22" height="26" viewBox="0 0 22 26">
      <path d="M5 1h13l-1 4H9L5 25H0z" fill="none" stroke="#16874a" strokeWidth="1.500" />
      <path d="M9 6h7c7 0 6 11-1 11h-4l-2 7H5z" fill="#17994f" />
      <path d="M12 9h3v4h-4z" fill="#1c282c" />
    </svg>
  );
}

const TASKS: { title: string; icon: ReactNode; active?: boolean }[] = [
  { title: "工程系统　版...", icon: <GreenP /> },
  {
    title: "兴森快捷衡阳...",
    icon: (
      <svg width="24" height="24" viewBox="0 0 24 24">
        <path d="M12 1C3 1-2 10 2 17l7 4h6l7-4C26 10 21 1 12 1z" fill="#e8b860" />
        <path d="M12 2v18M7 3l4 17M17 3l-4 17M2 9l8 11M22 9l-8 11" stroke="#f8e4b0" strokeWidth="1.500" />
        <path d="M14 9l2 4 5 1-4 3 1 5-4-3-5 2 2-5-3-3h5z" fill="#e0702c" />
      </svg>
    ),
  },
  {
    title: "Administrator...",
    icon: (
      <svg width="24" height="24" viewBox="0 0 24 24">
        <path d="M1 1h20l2 2v20H1z" fill="#2a3fd0" />
        <path d="M6 1h11v8H6z" fill="#c8d4e8" />
        <path d="M13 2h3v5h-3z" fill="#2a3fd0" />
        <path d="M4 12h16v11H4z" fill="#fff" />
        <path d="M6 14.500h12M6 17.500h12M6 20.500h7" stroke="#e88" />
      </svg>
    ),
  },
  {
    title: "EDS工程系统",
    icon: (
      <svg width="22" height="24" viewBox="0 0 22 24">
        <path d="M4 1h15c4 2 3 14-5 16l-6 1-2 6H1z" fill="#18a558" />
        <path d="M8 5h9l-1 3h-6l-1 3h5l-1 3H8l-2 7H4z" fill="#fff" />
      </svg>
    ),
  },
  {
    title: "Genesis",
    icon: (
      <svg width="24" height="22" viewBox="0 0 24 22">
        <ellipse cx="13" cy="13" rx="10" ry="7" fill="#1f8c96" />
        <ellipse cx="14" cy="14" rx="6" ry="4" fill="#7fc84a" />
        <circle cx="13" cy="14" r="2.500" fill="#2040a0" />
        <path d="M2 4l5-3 4 5-6 3z" fill="#46d4c8" />
      </svg>
    ),
  },
  { title: "Engineering T...", icon: <XWinIcon size={24} /> },
  { title: "Progress", icon: <XWinIcon size={24} /> },
  { title: "Graphic Edito...", icon: <XWinIcon size={24} />, active: true },
  { title: "is9fm00ga0 - ...", icon: <XWinIcon size={24} /> },
  {
    title: "IS9FM00GA0...",
    icon: (
      <svg width="24" height="24" viewBox="0 0 24 24">
        <path d="M7 2h12l4 4v17H7z" fill="#e8f0fa" stroke="#6a8cc0" />
        <path d="M10 10h11M10 14h11M10 18h11M13 8v12M17 8v12" stroke="#8aa8d8" />
        <rect x="1" y="2" width="11" height="11" fill="#e8f8e8" stroke="#3a9c3a" />
        <path d="M3 4l6 7M9 4l-6 7" stroke="#208020" strokeWidth="2" />
      </svg>
    ),
  },
];

function SogouS({ size }: { size: number }) {
  return (
    <svg width={size} height={size} viewBox="0 0 32 32">
      <path d="M1 6L27 1l4 25-25 5z" fill="#f0562a" />
      <path d="M23 9c-6-4-14-1-12 4 2 4 11 2 11 7 0 4-8 5-13 1" fill="none" stroke="#fff" strokeWidth="4" strokeLinecap="round" />
    </svg>
  );
}

function ImeBar() {
  return (
    <div className="absolute right-[13px] bottom-[38px] flex items-center text-[#1273d0]">
      <div className="relative z-10 -mr-1">
        <SogouS size={32} />
      </div>
      <div className="flex h-[25px] w-[150px] items-center justify-between bg-white pr-[5px] pl-[10px] font-['Noto_Sans_CJK_SC',sans-serif] text-[14px] font-bold">
        英
        <svg width="12" height="14" viewBox="0 0 12 14" fill="currentColor"><circle cx="2.500" cy="4" r="2" /><path d="M8 7h3c1 3-1 5-3 6z" /></svg>
        <svg width="13" height="16" viewBox="0 0 13 16" fill="none" stroke="currentColor" strokeWidth="1.500"><rect x="4" y="1" width="5" height="8" rx="2.500" fill="currentColor" /><path d="M1 7c0 6 11 6 11 0M6.500 12v3" /></svg>
        <svg width="16" height="13" viewBox="0 0 16 13" fill="none" stroke="currentColor" strokeWidth="1.500"><rect x="1" y="1" width="14" height="11" rx="1" /><path d="M3 4h10M3 6.500h10M5 9.500h6" strokeDasharray="2 1" /></svg>
        <svg width="16" height="14" viewBox="0 0 16 14" fill="currentColor"><path d="M4 0c2 2 6 2 8 0l4 3-2 4-2-1v8H4V6L2 7 0 3z" /></svg>
        <svg width="14" height="14" viewBox="0 0 14 14" fill="currentColor"><rect width="6" height="6" rx="1" /><circle cx="11" cy="3" r="2.200" fill="none" stroke="currentColor" strokeWidth="1.500" /><rect y="8" width="6" height="6" rx="1" /><rect x="8" y="8" width="6" height="6" rx="1" /></svg>
      </div>
    </div>
  );
}

function Taskbar() {
  return (
    <footer className="flex h-10 shrink-0 items-stretch bg-[#1c282c] font-['Open_Sans','Noto_Sans_CJK_SC',sans-serif] text-[12px] text-white">
      <button type="button" aria-label="Start" className="flex w-12 items-center justify-center">
        <svg width="16" height="16" viewBox="0 0 16 16" fill="#fff"><path d="M0 2l7-1v6.500H0zM8 1l8-1v7.500H8zM0 8.500h7V15l-7-1zM8 8.500h8V16l-8-1z" /></svg>
      </button>
      <button type="button" aria-label="Search" className="flex w-[50px] items-center justify-center">
        <svg width="20" height="20" viewBox="0 0 20 20" fill="none" stroke="#fff" strokeWidth="1.500"><circle cx="9" cy="9" r="8" /><circle cx="9" cy="9" r="3" fill="#fff" stroke="none" /><circle cx="8" cy="7.500" r="2" fill="#1c282c" stroke="none" /><path d="M15 15l3 4" strokeWidth="2" /></svg>
      </button>
      <button type="button" aria-label="Favorites" className="flex w-[54px] items-center justify-center">
        <svg width="24" height="24" viewBox="0 0 24 24"><rect width="24" height="24" rx="2" fill="#f58a30" /><path d="M12 4l2.500 5 5.500.8-4 4 1 5.700-5-2.700-5 2.700 1-5.700-4-4 5.500-.8z" fill="#fff" /></svg>
      </button>
      <button type="button" aria-label="Explorer" className="mr-[2px] flex w-[52px] items-center justify-center">
        <svg width="22" height="20" viewBox="0 0 22 20"><path d="M0 1h8l2 2h12v16H0z" fill="#f5cf60" /><path d="M0 1h8l2 3H0z" fill="#d8a028" /><path d="M4 11h14v8h-4v-4H8v4H4z" fill="#4a90d0" /></svg>
      </button>
      {TASKS.map((t) => (
        <button key={t.title} type="button" className={`flex w-[137px] shrink-0 flex-col text-left ${t.active ? "bg-[#4a575b]" : ""}`}>
          <span className="flex flex-1 items-center gap-[3px] pt-[2px] pl-2">
            <span className="flex w-6 shrink-0 justify-center">{t.icon}</span>
            <span className="whitespace-nowrap">{t.title}</span>
          </span>
          <span className={`h-[2px] bg-[#76b9ed] ${t.active ? "w-full" : "w-[129px]"}`} />
        </button>
      ))}
      <div className="flex flex-1 items-center justify-end">
        <svg width="13" height="8" viewBox="0 0 13 8" fill="none" stroke="#fff" strokeWidth="1.500" className="mr-[9px]"><path d="M1 7l5.500-6L12 7" /></svg>
        <svg width="18" height="14" viewBox="0 0 18 14" className="mr-[30px]"><path d="M0 13L11 0l-2 8z" fill="#f01818" /><path d="M11 5l6 9-7-3z" fill="#20d040" /></svg>
        <svg width="18" height="16" viewBox="0 0 18 16" fill="none" stroke="#fff" className="mr-[7px]"><path d="M1 5h3l4-4v14l-4-4H1zM10 5c2 2 2 4 0 6M12 3c3 3 3 7 0 10M14 1c4 4 4 10 0 14" /></svg>
        <svg width="17" height="17" viewBox="0 0 17 17" className="mr-[7px]"><circle cx="8.500" cy="8.500" r="8" fill="#f0d818" /><circle cx="8.500" cy="8.500" r="5.500" fill="#3a9c20" /><path d="M8.500 5v7M5 8.500h7" stroke="#fff" strokeWidth="2" /></svg>
        <span className="mr-[9px] text-[14px]">英</span>
        <SogouS size={18} />
        <div className="relative ml-[17px] w-[62px] text-center leading-[18px] whitespace-nowrap">
          <p>14:53 周五</p>
          <p>2024/1/5</p>
          <span className="absolute -top-[1px] -right-[6px] flex size-[10px] items-center justify-center rounded-full bg-[#e81020] text-[8px]">1</span>
        </div>
        <svg width="16" height="14" viewBox="0 0 16 14" fill="none" stroke="#fff" strokeWidth="1.500" className="ml-[20px]"><rect x="1" y="1" width="14" height="12" /><path d="M6 4l4 3-4 3z" fill="#fff" stroke="none" /></svg>
        <svg width="17" height="17" viewBox="0 0 17 17" fill="none" stroke="#fff" strokeWidth="1.500" className="mr-[19px] ml-[24px]"><path d="M1 1h15v11h-5l-2.500 3L6 12H1z" /></svg>
        <span className="mr-1 h-full w-px bg-[#5a6468]" />
      </div>
    </footer>
  );
}

export default function App() {
  return (
    <div className="relative flex h-screen flex-col overflow-hidden bg-[linear-gradient(180deg,#02525f,#00809a_20%,#00607a_34%,#008098_46%,#00566c_70%,#003448)] font-['Liberation_Mono',monospace] text-black">
      <main className="ml-2 flex min-h-0 flex-1 flex-col border-t border-l border-[#3b6f7c]">
        <header className="flex h-[30px] shrink-0 items-center bg-white pl-[7px] font-['Open_Sans',sans-serif] text-[13px] text-[#8c8c8c]">
          <XWinIcon />
          <h1 className="flex-1 pl-[5px]">Graphic Editor 9.07b2 (00@HY-HYCAM-PC531 - Windows, pid:16636)</h1>
          <svg width="110" height="12" viewBox="0 0 110 12" fill="none" stroke="#888" className="mr-[9px]">
            <path d="M9 6.500h10M99 1l10 10M109 1L99 11" />
            <rect x="54.500" y="1.500" width="9" height="9" />
          </svg>
        </header>
        <BrandBar />
        <div className="flex min-h-0 flex-1">
          <LayerPanel />
          <BoardView />
          <ToolPanel />
        </div>
        <CommandRow />
        <div className="h-[30px] shrink-0 border-t-2 border-[#6a9090] bg-black pt-px pb-[2px]">
          <p className="h-[25px] border-2 border-t-[#d8ffff] border-l-[#d8ffff] border-b-[#5d8f8f] border-r-[#5d8f8f] bg-[#b4ffff] pl-2 text-center text-[12px] leading-[23px] font-bold">
            474 r21 Pads were selected
          </p>
        </div>
      </main>
      <Taskbar />
      <span className="absolute bottom-[97px] left-[3px] h-[26px] w-[6px] rounded-full bg-[#30d070]" />
      <Histogram />
      <ResultsViewer />
      <ImeBar />
    </div>
  );
}
